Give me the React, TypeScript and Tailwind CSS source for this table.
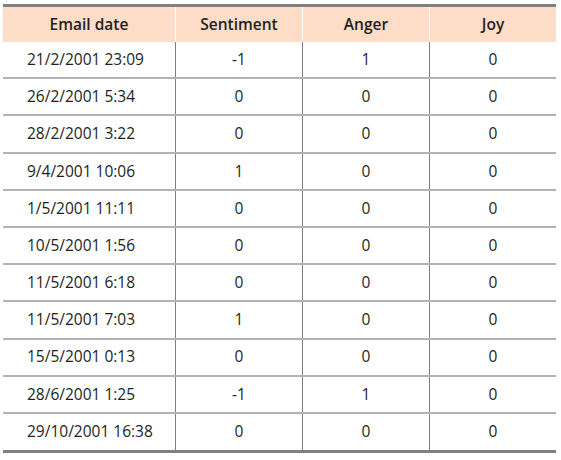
const rows: [string, string, string, string][] = [
  ["21/2/2001 23:09", "-1", "1", "0"],
  ["26/2/2001 5:34", "0", "0", "0"],
  ["28/2/2001 3:22", "0", "0", "0"],
  ["9/4/2001 10:06", "1", "0", "0"],
  ["1/5/2001 11:11", "0", "0", "0"],
  ["10/5/2001 1:56", "0", "0", "0"],
  ["11/5/2001 6:18", "0", "0", "0"],
  ["11/5/2001 7:03", "1", "0", "0"],
  ["15/5/2001 0:13", "0", "0", "0"],
  ["28/6/2001 1:25", "-1", "1", "0"],
  ["29/10/2001 16:38", "0", "0", "0"],
];

const headers = ["Email date", "Sentiment", "Anger", "Joy"];

export default function App() {
  return (
    <div className="h-[460px] w-[561px] bg-white pl-[3px] pt-[4px] font-['Open_Sans',sans-serif] text-[15.5px] text-[#231f20]">
      <div className="w-[553px] border-t-[3px] border-b-[3px] border-[#808080]">
        <div className="grid h-[35px] grid-cols-[172px_127px_127px_127px] bg-[#fddcc8] font-semibold">
          {headers.map((h, i) => (
            <div
              key={h}
              className={`flex items-center justify-center ${i > 0 ? "border-l border-white" : ""}`}
            >
              {h}
            </div>
          ))}
        </div>
        {rows.map((r, ri) => (
          <div
            key={ri}
            className={`grid grid-cols-[172px_127px_127px_127px] ${
              ri < rows.length - 1 ? "h-[37.2px] border-b-2 border-[#b3b3b3]" : "h-[36px]"
            }`}
          >
            <div className="flex items-center pl-[24px]">{r[0]}</div>
            <div className="flex items-center justify-center border-l border-[#7d7d7d]">{r[1]}</div>
            <div className="flex items-center justify-center border-l border-[#7d7d7d]">{r[2]}</div>
            <div className="flex items-center justify-center border-l border-[#7d7d7d]">{r[3]}</div>
          </div>
        ))}
      </div>
    </div>
  );
}
